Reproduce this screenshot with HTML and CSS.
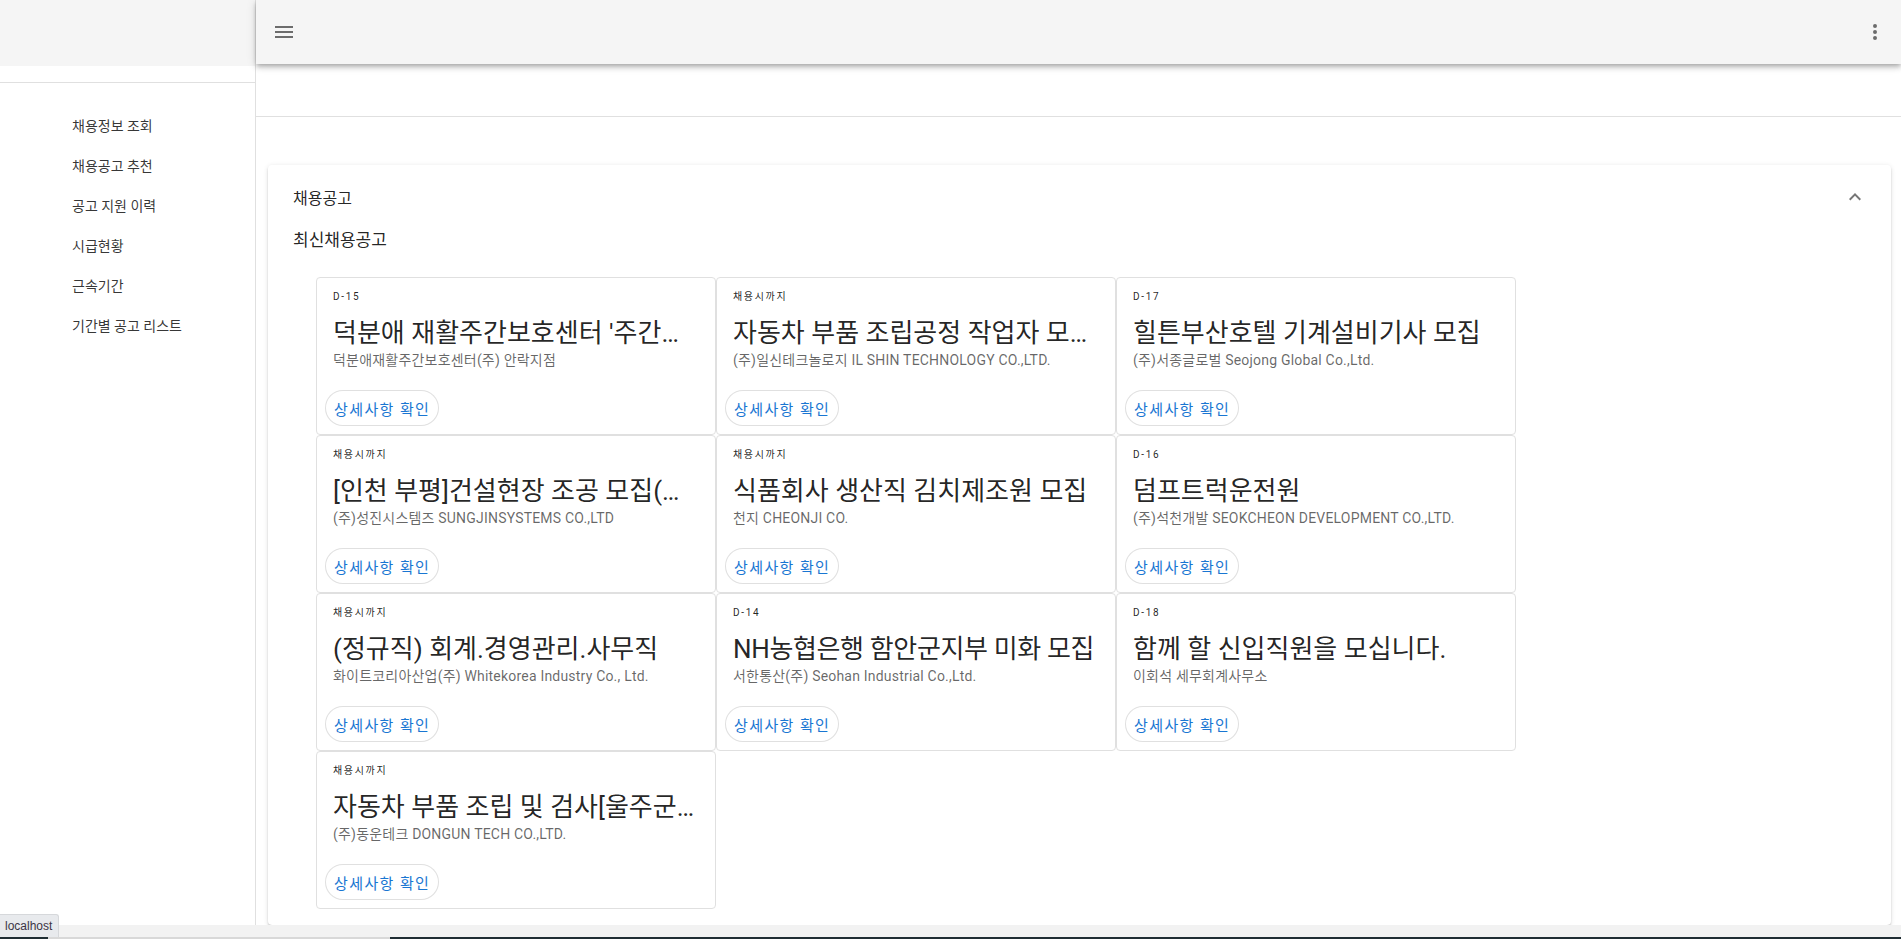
FILE: index.html
```html
<!DOCTYPE html>
<html lang="ko">
<head>
<meta charset="utf-8">
<title>채용공고</title>
<link rel="stylesheet" href="styles.css">
</head>
<body>
<div class="app">
  <aside class="drawer">
    <div class="drawer-top"></div>
    <div class="drawer-gap"></div>
    <ul class="nav">
      <li class="nav-item">채용정보 조회</li>
      <li class="nav-item">채용공고 추천</li>
      <li class="nav-item">공고 지원 이력</li>
      <li class="nav-item">시급현황</li>
      <li class="nav-item">근속기간</li>
      <li class="nav-item">기간별 공고 리스트</li>
    </ul>
  </aside>
  <main class="main">
    <header class="appbar">
      <button class="icon-btn" aria-label="menu">
        <svg viewBox="0 0 24 24" width="24" height="24"><path d="M3,6H21V8H3V6M3,11H21V13H3V11M3,16H21V18H3V16Z"/></svg>
      </button>
      <div class="spacer"></div>
      <button class="icon-btn" aria-label="more">
        <svg viewBox="0 0 24 24" width="24" height="24"><path d="M12,16A2,2 0 0,1 14,18A2,2 0 0,1 12,20A2,2 0 0,1 10,18A2,2 0 0,1 12,16M12,10A2,2 0 0,1 14,12A2,2 0 0,1 12,14A2,2 0 0,1 10,12A2,2 0 0,1 12,10M12,4A2,2 0 0,1 14,6A2,2 0 0,1 12,8A2,2 0 0,1 10,6A2,2 0 0,1 12,4Z"/></svg>
      </button>
    </header>
    <div class="subbar"></div>
    <div class="content">
      <section class="panel">
        <div class="panel-header">
          <span class="panel-title">채용공고</span>
          <svg class="chevron" viewBox="0 0 24 24" width="24" height="24"><path d="M7.41,15.41L12,10.83L16.59,15.41L18,14L12,8L6,14L7.41,15.41Z"/></svg>
        </div>
        <div class="panel-body">
          <div class="section-title">최신채용공고</div>
          <div class="cards">
            <div class="card">
              <div class="overline">D-15</div>
              <div class="title">덕분애 재활주간보호센터 '주간보호 요양보호사 모집'</div>
              <div class="subtitle">덕분애재활주간보호센터(주) 안락지점</div>
              <div class="actions"><button class="btn">상세사항 확인</button></div>
            </div>
            <div class="card">
              <div class="overline">채용시까지</div>
              <div class="title">자동차 부품 조립공정 작업자 모집 (주간)</div>
              <div class="subtitle">(주)일신테크놀로지 IL SHIN TECHNOLOGY CO.,LTD.</div>
              <div class="actions"><button class="btn">상세사항 확인</button></div>
            </div>
            <div class="card">
              <div class="overline">D-17</div>
              <div class="title">힐튼부산호텔 기계설비기사 모집</div>
              <div class="subtitle">(주)서종글로벌 Seojong Global Co.,Ltd.</div>
              <div class="actions"><button class="btn">상세사항 확인</button></div>
            </div>
            <div class="card">
              <div class="overline">채용시까지</div>
              <div class="title">[인천 부평]건설현장 조공 모집(일용직)</div>
              <div class="subtitle">(주)성진시스템즈 SUNGJINSYSTEMS CO.,LTD</div>
              <div class="actions"><button class="btn">상세사항 확인</button></div>
            </div>
            <div class="card">
              <div class="overline">채용시까지</div>
              <div class="title">식품회사 생산직 김치제조원 모집</div>
              <div class="subtitle">천지 CHEONJI CO.</div>
              <div class="actions"><button class="btn">상세사항 확인</button></div>
            </div>
            <div class="card">
              <div class="overline">D-16</div>
              <div class="title">덤프트럭운전원</div>
              <div class="subtitle">(주)석천개발 SEOKCHEON DEVELOPMENT CO.,LTD.</div>
              <div class="actions"><button class="btn">상세사항 확인</button></div>
            </div>
            <div class="card">
              <div class="overline">채용시까지</div>
              <div class="title">(정규직) 회계.경영관리.사무직</div>
              <div class="subtitle">화이트코리아산업(주) Whitekorea Industry Co., Ltd.</div>
              <div class="actions"><button class="btn">상세사항 확인</button></div>
            </div>
            <div class="card">
              <div class="overline">D-14</div>
              <div class="title title-tight">NH농협은행 함안군지부 미화 모집</div>
              <div class="subtitle">서한통산(주) Seohan Industrial Co.,Ltd.</div>
              <div class="actions"><button class="btn">상세사항 확인</button></div>
            </div>
            <div class="card">
              <div class="overline">D-18</div>
              <div class="title">함께 할 신입직원을 모십니다.</div>
              <div class="subtitle">이회석 세무회계사무소</div>
              <div class="actions"><button class="btn">상세사항 확인</button></div>
            </div>
            <div class="card">
              <div class="overline">채용시까지</div>
              <div class="title">자동차 부품 조립 및 검사[울주군 웅촌면]</div>
              <div class="subtitle">(주)동운테크 DONGUN TECH CO.,LTD.</div>
              <div class="actions"><button class="btn">상세사항 확인</button></div>
            </div>
          </div>
        </div>
      </section>
    </div>
  </main>
</div>
<div class="status-tip">localhost</div>
<div class="bottom-bar"></div>
<div class="bottom-strip"><div class="strip-seg"></div></div>
</body>
</html>
```

FILE: styles.css
```css
html, body {
  margin: 0;
  padding: 0;
  height: 100%;
  overflow: hidden;
  background: #fff;
}
body {
  font-family: Roboto, "Noto Sans CJK KR", sans-serif;
  color: rgba(0, 0, 0, 0.87);
}
.app {
  display: flex;
  height: 100vh;
}
.drawer {
  width: 255px;
  flex: none;
  border-right: 1px solid #e0e0e0;
  background: #fff;
}
.drawer-top {
  height: 66px;
  background: #f5f5f5;
}
.drawer-gap {
  height: 16px;
  border-bottom: 1px solid #e0e0e0;
}
.nav {
  list-style: none;
  margin: 0;
  padding: 22px 0 0 0;
}
.nav-item {
  height: 40px;
  display: flex;
  align-items: center;
  padding-left: 72px;
  font-size: 14px;
  color: rgba(0, 0, 0, 0.8);
}
.main {
  flex: 1;
  min-width: 0;
  display: flex;
  flex-direction: column;
}
.appbar {
  height: 64px;
  flex: none;
  background: #f5f5f5;
  display: flex;
  align-items: center;
  padding: 0 2px 0 4px;
  box-shadow: 0 2px 4px -1px rgba(0,0,0,.2), 0 4px 5px 0 rgba(0,0,0,.14), 0 1px 10px 0 rgba(0,0,0,.12);
  position: relative;
  z-index: 2;
}
.spacer { flex: 1; }
.icon-btn {
  width: 48px;
  height: 48px;
  border: 0;
  background: transparent;
  padding: 0;
  display: flex;
  align-items: center;
  justify-content: center;
}
.icon-btn svg { fill: rgba(0, 0, 0, 0.56); }
.subbar {
  height: 52px;
  flex: none;
  border-bottom: 1px solid #e0e0e0;
}
.content {
  padding: 48px 10px 0 12px;
}
.panel {
  background: #fff;
  border-radius: 4px;
  box-shadow: 0 3px 1px -2px rgba(0,0,0,.2), 0 2px 2px 0 rgba(0,0,0,.14), 0 1px 5px 0 rgba(0,0,0,.12);
}
.panel-header {
  height: 64px;
  padding: 0 24px 0 25px;
  display: flex;
  align-items: center;
  justify-content: space-between;
  font-size: 16px;
}
.chevron { fill: rgba(0, 0, 0, 0.54); }
.panel-body {
  padding: 0 24px 16px 25px;
}
.section-title {
  font-size: 17px;
  line-height: 22px;
}
.cards {
  margin: 26px 0 0 23px;
  display: grid;
  grid-template-columns: repeat(3, 400px);
  grid-auto-rows: 158px;
}
.card {
  border: 1px solid #e0e0e0;
  border-radius: 4px;
  display: flex;
  flex-direction: column;
  padding: 11px 0 0 0;
  min-width: 0;
}
.overline {
  padding: 0 16px;
  font-size: 10px;
  line-height: 16px;
  letter-spacing: 0.1666em;
  color: rgba(0, 0, 0, 0.87);
}
.title {
  margin-top: 12px;
  padding: 0 16px;
  font-size: 26px;
  line-height: 32px;
  white-space: nowrap;
  overflow: hidden;
  text-overflow: ellipsis;
}
.title-tight {
  letter-spacing: -0.35px;
}
.subtitle {
  margin-top: 2px;
  padding: 0 16px;
  font-size: 14px;
  line-height: 18px;
  letter-spacing: 0.2px;
  color: rgba(0, 0, 0, 0.6);
  white-space: nowrap;
  overflow: hidden;
  text-overflow: ellipsis;
}
.actions {
  margin-top: auto;
  padding: 8px;
  display: flex;
}
.btn {
  height: 36px;
  padding: 0 8px;
  border: 1px solid rgba(0, 0, 0, 0.12);
  border-radius: 28px;
  background: #fff;
  color: #1976d2;
  font-family: Roboto, "Noto Sans CJK KR", sans-serif;
  font-size: 15px;
  font-weight: 400;
  letter-spacing: 1.4px;
}
.status-tip {
  position: fixed;
  left: 0;
  bottom: 2px;
  height: 22px;
  padding: 0 6px 0 5px;
  background: #e8eaed;
  border: 1px solid #d6d8db;
  border-left: 0;
  border-bottom: 0;
  border-top-right-radius: 3px;
  font-family: "Liberation Sans", Arial, sans-serif;
  font-size: 12px;
  line-height: 22px;
  color: #3c3545;
  z-index: 6;
}
.bottom-bar {
  position: fixed;
  left: 0;
  right: 0;
  bottom: 2px;
  height: 12px;
  background: #f2f2f2;
  z-index: 5;
}
.bottom-strip {
  position: fixed;
  left: 0;
  right: 0;
  bottom: 0;
  height: 2px;
  background: #1f2d33;
  z-index: 5;
}
.strip-seg {
  margin-left: 48px;
  width: 342px;
  height: 2px;
  background: #d8d8d8;
}
```
